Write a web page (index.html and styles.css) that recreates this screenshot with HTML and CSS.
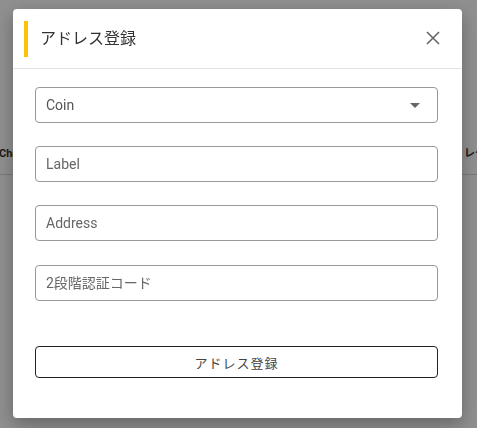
FILE: index.html
```html
<!DOCTYPE html>
<html lang="ja">
<head>
  <meta charset="UTF-8">
  <meta name="viewport" content="width=device-width, initial-scale=1.0">
  <title>アドレス登録</title>
  <link rel="stylesheet" href="styles.css">
</head>
<body>
  <div class="page">
    <div class="page-tabs">
      <div class="page-tab">Chart</div>
      <div class="page-tab">Order</div>
      <div class="page-tab">レート</div>
    </div>
  </div>

  <div class="overlay">
    <div class="modal">
      <div class="modal-header">
        <div class="modal-title">アドレス登録</div>
        <button class="close" aria-label="close">
          <svg width="14" height="14" viewBox="0 0 14 14"><path d="M1 1L13 13M13 1L1 13" stroke="#666" stroke-width="1.6" fill="none"/></svg>
        </button>
      </div>
      <div class="modal-body">
        <div class="field select">
          <span class="value">Coin</span>
          <svg class="caret" width="10" height="5" viewBox="0 0 10 5"><path d="M0 0H10L5 5Z" fill="#666"/></svg>
        </div>
        <input class="field" type="text" placeholder="Label">
        <input class="field" type="text" placeholder="Address">
        <input class="field" type="text" placeholder="2段階認証コード">
        <button class="submit">アドレス登録</button>
      </div>
    </div>
  </div>
</body>
</html>
```

FILE: styles.css
```css
body { margin: 0; font-family: Roboto, "Noto Sans CJK JP", sans-serif; background: #fff; overflow: hidden; }
.page { height: 428px; padding-top: 135px; box-sizing: border-box; overflow: hidden; }
.page-tabs { display: flex; justify-content: space-between; height: 39px; border-bottom: 1px solid #d8d8d8; }
.page-tab { font-size: 11px; font-weight: bold; color: #333; line-height: 38px; margin-left: -1px; }
.page-tab:nth-child(2) { visibility: hidden; }
.page-tab:last-child { margin-right: -20px; }

.overlay { position: fixed; inset: 0; padding: 0 2px 1px 0; background: rgba(0, 0, 0, 0.44); display: flex; justify-content: center; align-items: center; }
.modal { width: 449px; height: 409px; background: #fff; border-radius: 4px; box-shadow: 0 6px 18px rgba(0, 0, 0, 0.3); box-sizing: border-box; }

.modal-header { height: 60px; border-bottom: 1px solid #e2e2e2; display: flex; align-items: center; padding: 0 22px 0 11px; box-sizing: border-box; }
.modal-title { flex: 1; border-left: 4px solid #ffc107; height: 36px; line-height: 36px; padding-left: 12px; font-size: 16px; color: #333; }
.close { border: none; background: none; padding: 0; width: 14px; height: 14px; display: flex; cursor: pointer; margin-top: -2px; }

.modal-body { display: flex; flex-direction: column; padding: 18px 24px 0 22px; }
.field { height: 36px; border: 1px solid #999; border-radius: 4px; padding: 0 10px; margin: 0 0 23px; font-family: inherit; font-size: 14px; color: #555; box-sizing: border-box; outline: none; }
.field::placeholder { color: #666; }
.field:nth-child(3) { margin-bottom: 24px; }
.select { display: flex; align-items: center; justify-content: space-between; padding-right: 17px; }
.select .value { color: #555; }
.field:nth-child(4) { margin-bottom: 45px; }
.submit { height: 32px; background: #fff; border: 1px solid #222; border-radius: 4px; font-family: inherit; font-size: 13px; letter-spacing: 1px; color: #444; cursor: pointer; }
```
